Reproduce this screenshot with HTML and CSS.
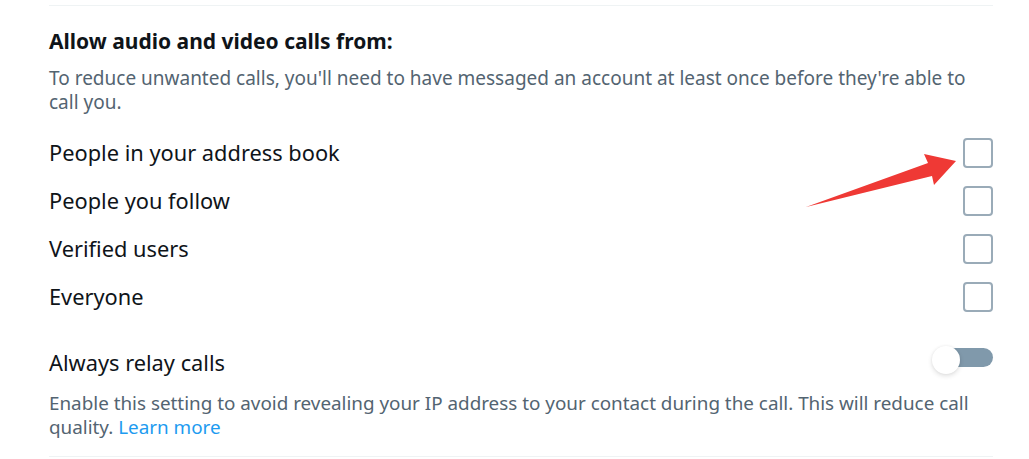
FILE: index.html
```html
<!DOCTYPE html>
<html lang="en">
<head>
<meta charset="utf-8">
<link rel="stylesheet" href="styles.css">
</head>
<body>
<div class="panel">
  <section class="section">
    <h2 class="title">Allow audio and video calls from:</h2>
    <p class="desc">To reduce unwanted calls, you'll need to have messaged an account at least once before they're able to call you.</p>
    <div class="options">
      <div class="row"><span class="label">People in your address book</span><span class="box"></span></div>
      <div class="row"><span class="label">People you follow</span><span class="box"></span></div>
      <div class="row"><span class="label">Verified users</span><span class="box"></span></div>
      <div class="row"><span class="label">Everyone</span><span class="box"></span></div>
    </div>
    <div class="relay">
      <div class="row relay-row"><span class="label">Always relay calls</span><span class="toggle"><span class="track"></span><span class="knob"></span></span></div>
      <p class="desc relay-desc">Enable this setting to avoid revealing your IP address to your contact during the call. This will reduce call quality. <a class="link" href="#">Learn more</a></p>
    </div>
  </section>
</div>
<svg class="arrow" width="1029" height="459" viewBox="0 0 1029 459">
  <polygon points="806,207 928,163 924,154 956,161 934,185 932,176" fill="#ef3935"/>
</svg>
</body>
</html>
```
FILE: styles.css
```css
html, body {
  margin: 0;
  padding: 0;
  background: #ffffff;
}
body {
  font-family: "Noto Sans", "Open Sans", sans-serif;
  color: #0f1419;
  width: 1029px;
  height: 459px;
  overflow: hidden;
  position: relative;
}
.panel {
  padding: 5px 36px 0 49px;
}
.section {
  border-top: 1px solid #eff3f4;
  border-bottom: 1px solid #eff3f4;
  padding-top: 22px;
  padding-bottom: 17px;
}
.title {
  margin: 0;
  font-size: 21px;
  font-weight: 700;
  line-height: 26px;
}
.desc {
  margin: 12px 0 0;
  font-size: 19px;
  line-height: 24px;
  color: #536471;
}
.options {
  margin-top: 15px;
}
.row {
  display: flex;
  align-items: center;
  justify-content: space-between;
  height: 48px;
}
.label {
  font-size: 21.8px;
  line-height: 28px;
}
.box {
  width: 26px;
  height: 26px;
  border: 2px solid #9aabb8;
  border-radius: 4px;
}
.relay {
  margin-top: 18px;
}
.toggle {
  position: relative;
  width: 62px;
  height: 28px;
}
.track {
  position: absolute;
  right: 0;
  top: -1px;
  width: 50px;
  height: 19px;
  border-radius: 10px;
  background: #8099ab;
}
.knob {
  position: absolute;
  left: 1px;
  top: -3px;
  width: 28px;
  height: 28px;
  border-radius: 50%;
  background: #ffffff;
  box-shadow: 0 2px 5px rgba(0, 0, 0, 0.12), 0 0 3px rgba(0, 0, 0, 0.06);
}
.relay-desc {
  margin-top: 4px;
  font-size: 18.85px;
}
.link {
  display: inline-block;
  color: #1d9bf0;
  text-decoration: none;
}
.arrow {
  position: absolute;
  left: 0;
  top: 0;
  pointer-events: none;
}
```
